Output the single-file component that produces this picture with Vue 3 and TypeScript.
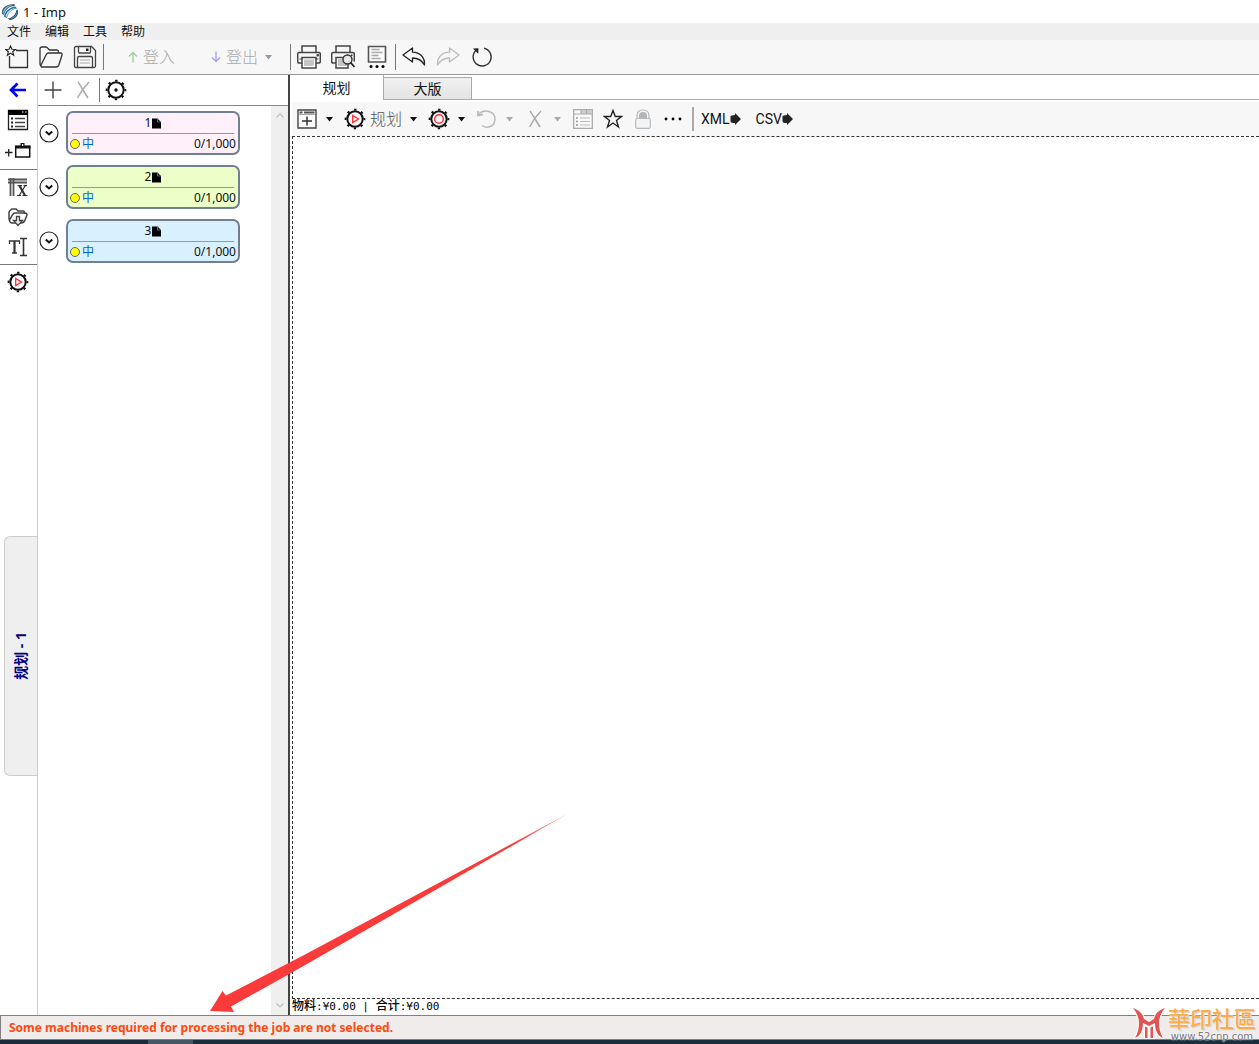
<script setup lang="ts">
import { ref } from 'vue'

interface Glyph {
  w: number
  h: number
  body: string
}

interface Job {
  id: number
  level: string
  count: string
  color: string
}

const gearBase =
  '<g fill="none" stroke="#111"><circle cx="11" cy="11" r="7.700" stroke-width="2"/>' +
  '<circle cx="11" cy="11" r="9.400" stroke-width="1.900" stroke-dasharray="2.4 4.98" stroke-dashoffset="1.2"/></g>'

const icons: Record<string, Glyph> = {
  logo: {
    w: 18, h: 18,
    body: '<path d="M1 11C0 6 4 2 10 1.500L13 1c1 0 1 1 .5 2C9 3 4.500 6 3 12z" fill="#4a5863"/><path d="M1.500 9.500C3 5 7 2 11 2 7 4 3.500 7 2.500 11z" fill="#6db9e8"/><path d="M3 13.500C4 8 9 4 14.500 3.500l1.500 2C10.500 6 7 10 6 15z" fill="#1473b8"/><path d="M4.500 13C6 8.500 9.500 5.500 14.500 4.800 10 7 7 10 5.800 14z" fill="#a9dcf9"/><path d="M6.500 15.500C12 15 15 11 15.500 6.500l1.500 1c1 5-3 9-8 9.500z" fill="#3b4b58"/><path d="M8.500 15.800c4-1 7-4 7.500-7.500 1 4-3 7.500-7.500 7.500z" fill="#3d9bdc"/>',
  },
  fresh: {
    w: 24, h: 24,
    body: '<path d="M11 5.500h11.500v17h-18V11" fill="none" stroke="#333" stroke-width="1.3"/><path d="M5.500 1l1.400 3.300 3.600.2-2.800 2.200 1 3.500-3.200-2-3.100 2 1-3.500L.6 4.500l3.500-.2z" fill="#f7f7f7" stroke="#222" stroke-width="1.100"/>',
  },
  open: {
    w: 24, h: 24,
    body: '<path d="M1 19V4q0-2 2-2h4q1 0 2 1.500L10.500 5H18q1.500 0 1.500 2v1M3 22h14q2 0 2.700-1.500L23 10q.5-2-1.500-2H9.500Q8 8 7.300 9.500L2 20q-.5 2 1 2zM1 19q0 2 2 3" fill="none" stroke="#333" stroke-width="1.3"/>',
  },
  save: {
    w: 24, h: 24,
    body: '<path d="M1.500 3q0-1.500 1.500-1.500h15.500l4 4V21q0 1.500-1.500 1.500H3q-1.500 0-1.500-1.500zM5.500 1.500V7q0 1 1 1h10q1 0 1-1V1.500M4.500 22V13q0-1.500 1.500-1.500h12q1.500 0 1.500 1.500v9" fill="none" stroke="#444" stroke-width="1.300"/><path d="M7 15h10M7 18h10" stroke="#aaa"/><path d="M13 3.500h2.500V6H13z" fill="#222"/>',
  },
  up: { w: 10, h: 12, body: '<path d="M5 11.500V1.500M1 5.500l4-4 4 4" fill="none" stroke="#9fd0a4" stroke-width="1.400"/>' },
  down: { w: 10, h: 12, body: '<path d="M5 .5v10M1 6.500l4 4 4-4" fill="none" stroke="#a9a5f8" stroke-width="1.400"/>' },
  caret: { w: 7, h: 5, body: '<path d="M0 0h7L3.500 4.500z" fill="currentColor"/>' },
  print: {
    w: 24, h: 24,
    body: '<g fill="none" stroke="#444" stroke-width="1.500"><path d="M5 7V1h14v6M5 18H2q-1.300 0-1.300-1.500V9Q.7 7.500 2 7.500h20q1.300 0 1.300 1.500v7.500Q23.300 18 22 18h-3"/><path d="M5 12.500h14V23H5z" fill="#fff"/></g><path d="M7 14.500h10V20l-2 1H7z" fill="#c4c4c4"/><path d="M20 9.500h1.500V11H20zM2.500 14h3M18.500 14h3" fill="#333" stroke="#444"/>',
  },
  preview: {
    w: 24, h: 24,
    body: '<g fill="none" stroke="#444" stroke-width="1.500"><path d="M5 7V1h14v6M5 18H2q-1.300 0-1.300-1.500V9Q.7 7.500 2 7.500h20q1.300 0 1.300 1.500v7.500"/><path d="M5 12.500h12V23H5z" fill="#fff"/></g><path d="M7 14h9v7H7z" fill="#c4c4c4"/><path d="M20 9.500h1.500V11H20z" fill="#333"/><circle cx="16.500" cy="14.500" r="4.500" fill="#e8e8e8" stroke="#333" stroke-width="1.400"/><path d="M19.500 17.500l4 4.500" stroke="#222" stroke-width="1.800"/>',
  },
  sheet: {
    w: 20, h: 24,
    body: '<path d="M1.500 1.500h17v15.500h-17z" fill="#fafafa" stroke="#555" stroke-width="1.600"/><path d="M4.500 4.500h8M4.500 7.500h11M4.500 10.500h7M4.500 13.500h9" stroke="#aaa" stroke-width="1.600"/><circle cx="4" cy="21.500" r="1.500"/><circle cx="10" cy="21.500" r="1.500"/><circle cx="16" cy="21.500" r="1.500"/>',
  },
  undo: { w: 24, h: 20, body: '<path d="M1 8l9.500-7v4.200C18 5.500 23 10 22.500 18 20 13.500 16 11 10.500 11v4z" fill="none" stroke="#222" stroke-width="1.300" stroke-linejoin="round"/>' },
  redo: { w: 24, h: 20, body: '<path d="M23 8l-9.500-7v4.200C6 5.500 1 10 1.500 18 4 13.500 8 11 13.500 11v4z" fill="none" stroke="#bcbcbc" stroke-width="1.300" stroke-linejoin="round"/>' },
  refresh: { w: 22, h: 22, body: '<path d="M13 2.200A9 9 0 1 1 5.500 4" fill="none" stroke="#333" stroke-width="1.400"/><path d="M2 2.500l5.500-.2-.3 5.500z" fill="#222"/>' },
  back: { w: 18, h: 16, body: '<path d="M17 8H3M8.500 1.500L2 8l6.500 6.500" fill="none" stroke="#00f" stroke-width="2.700"/>' },
  list: {
    w: 22, h: 22,
    body: '<path d="M1.500 1.500h19v19h-19z" fill="#fff" stroke="#222" stroke-width="1.300"/><path d="M1 1h20v5H1z" fill="#000"/><path d="M15 3h1.500M18 3h1.500" stroke="#fff"/><path d="M4 9.500h2M4 13.500h2M4 17.500h2" stroke="#222" stroke-width="2"/><path d="M8 9.500h10M8 13.500h10M8 17.500h10" stroke="#444" stroke-width="1.300"/>',
  },
  addcase: { w: 26, h: 18, body: '<path d="M0 11.500h7.500M3.700 8v7.500" stroke="#222" stroke-width="1.300"/><path d="M10.700 5.500h14v10.500h-14z" fill="#fff" stroke="#111" stroke-width="1.500"/><path d="M10 4.500h15.500v3H10zM15.500 2h4v3h-4z" fill="#111"/><path d="M17 3h1.200v2H17z" fill="#fff"/>' },
  gridx: { w: 22, h: 22, body: '<path d="M1 3.500h19M1 6.500h19M3.500 2v18M6.500 2v18" stroke="#555" stroke-width="1.800"/><path d="M10.500 9.700h4.500M16.500 9.700h3.500M10 19.500h4M15.500 19.500h5" stroke="#333" stroke-width="1.200"/><path d="M12.500 9.700l5.500 9.800" stroke="#333" stroke-width="2.200"/><path d="M18.200 9.700l-6 9.800" stroke="#333" stroke-width="1.200"/>' },
  inbox: { w: 22, h: 20, body: '<path d="M3 15L2 12V5q1-2 3-3h4l2 2h5q1.500 0 1.500 2v1M3 15q-1-1 0-3l3-5q1-1 2-1h10q2 0 2 2l-2 5q-1 3-4 3H5q-1 0-2-1" fill="none" stroke="#444" stroke-width="1.500"/><path d="M9.500 9.500h3v4h3L11 18.500 6.500 13.500h3z" fill="#eee" stroke="#444" stroke-width="1.300"/>' },
  text: { w: 20, h: 20, body: '<path d="M1.500 7V4h10v3" fill="none" stroke="#333" stroke-width="1.300"/><path d="M6.500 4v12" stroke="#333" stroke-width="2.200"/><path d="M4 16h5M12 1.500h7M12 18.500h7" stroke="#333" stroke-width="1.400"/><path d="M15.500 1.500v17" stroke="#333" stroke-width="1.600"/>' },
  gearplay: { w: 22, h: 22, body: gearBase + '<path d="M8.700 7.500l5.800 3.500-5.800 3.500z" fill="none" stroke="#fb2b37" stroke-width="1.300"/>' },
  geardot: { w: 22, h: 22, body: gearBase + '<circle cx="11" cy="11" r="1.700" fill="#111"/>' },
  gearring: { w: 22, h: 22, body: gearBase + '<circle cx="11" cy="11" r="4.300" fill="none" stroke="#fb2b37" stroke-width="1.400"/>' },
  plus: { w: 18, h: 18, body: '<path d="M.5 9h17M9 .5v17" stroke="#444" stroke-width="1.400"/>' },
  cross: { w: 14, h: 18, body: '<path d="M2 1c1 1 8 13 10 16M13 1C10 4 4 12 1.500 17" fill="none" stroke="#aaa" stroke-width="1.500"/>' },
  chevron: { w: 20, h: 20, body: '<circle cx="10" cy="10" r="9" fill="#fff" stroke="#222" stroke-width="1.200"/><path d="M6.800 8.500l3.200 3 3.200-3" fill="none" stroke="#111" stroke-width="2"/>' },
  page: { w: 9, h: 11, body: '<path d="M0 .5h5.500L9 4v6.500H0z" fill="#000"/><path d="M5.500 1v3H9" fill="none" stroke="#4b83c4" stroke-width=".8"/>' },
  addtable: { w: 20, h: 20, body: '<path d="M1 1h18v18H1z" fill="#fafafa" stroke="#444" stroke-width="1.400"/><path d="M2.500 3.500h3M7 3.500h10.500" stroke="#555" stroke-width="2"/><path d="M2 5.500h16" stroke="#aaa"/><path d="M5 12h10M10 7.500v9" stroke="#333" stroke-width="1.500"/>' },
  revert: { w: 20, h: 20, body: '<path d="M2 5C7-.5 18 2 18 10c0 8-8 10-13 6.500" fill="none" stroke="#bbb" stroke-width="1.500"/><path d="M1 2v4.500l5-1" fill="none" stroke="#b3b3b3" stroke-width="1.500"/>' },
  listoff: { w: 20, h: 20, body: '<path d="M.7.7h18.600v18.600H.7z" fill="#fafafa" stroke="#aaa" stroke-width="1.300"/><path d="M8 1h11v4H8z" fill="#ccc"/><path d="M1 5h18M8 1v4M13.500 1v4" stroke="#aaa"/><path d="M3 9h2M3 12.500h2M3 16h2" stroke="#999" stroke-width="1.600"/><path d="M7 9h10M7 12.500h10M7 16h10" stroke="#bbb" stroke-width="1.200"/>' },
  star: { w: 20, h: 20, body: '<path d="M10 1.500l2.300 6h6.200l-5 4 2 6.500-5.500-4-5.500 4 2-6.500-5-4h6.200z" fill="none" stroke="#222" stroke-width="1.400"/>' },
  lock: { w: 16, h: 20, body: '<path d="M2 10V7q0-6 6-6t6 6v3z" fill="#f4f4f4" stroke="#b4bbc0" stroke-width="1.200"/><path d="M4 10V7q0-4 4-4t4 4v3z" fill="#b5b5b5"/><path d="M.7 11q0-1.500 1.500-1.500h11.600q1.500 0 1.500 1.500v6.800q0 1.500-1.500 1.500H2.200q-1.500 0-1.500-1.500z" fill="#f4f4f4" stroke="#b4bbc0" stroke-width="1.200"/>' },
  dots: { w: 20, h: 4, body: '<circle cx="3" cy="2" r="1.400"/><circle cx="10" cy="2" r="1.400"/><circle cx="17" cy="2" r="1.400"/>' },
  export: { w: 11, h: 12, body: '<path d="M.5 3.500Q1 2 5 2V0l6 6-6 6v-2Q1 10 .5 8.500z" fill="#222"/>' },
  scrollup: { w: 8, h: 5, body: '<path d="M.5 4.500L4 1l3.500 3.500" fill="none" stroke="#c2c2c2" stroke-width="1.200"/>' },
  scrolldown: { w: 8, h: 5, body: '<path d="M.5.5L4 4 7.500.5" fill="none" stroke="#c2c2c2" stroke-width="1.200"/>' },
}

const menus = ['文件', '编辑', '工具', '帮助']
const fileTools = [['fresh', '新建'], ['open', '打开'], ['save', '保存']]
const printTools = [['print', '打印'], ['preview', '打印预览'], ['sheet', '报表']]
const historyTools = [['undo', '撤消'], ['redo', '重做'], ['refresh', '刷新']]
const railGroups = [
  [['back', '返回'], ['list', '列表'], ['addcase', '添加作业']],
  [['gridx', '网格'], ['inbox', '导入'], ['text', '文本']],
  [['gearplay', '运行']],
]
const jobs: Job[] = [
  { id: 1, level: '中', count: '0/1,000', color: '#fff0fa' },
  { id: 2, level: '中', count: '0/1,000', color: '#ecffc8' },
  { id: 3, level: '中', count: '0/1,000', color: '#d9f1ff' },
]
const tabs = ['规划', '大版']
const activeTab = ref(tabs[0])
</script>

<template>
  <div class="app">
    <header class="titlebar">
      <svg :width="icons.logo.w" :height="icons.logo.h" v-html="icons.logo.body" />
      <span>1 - Imp</span>
    </header>

    <nav class="menubar">
      <button v-for="m in menus" :key="m">{{ m }}</button>
    </nav>

    <div class="toolbar">
      <button v-for="[name, label] in fileTools" :key="name" class="tool" :aria-label="label">
        <svg :width="icons[name].w" :height="icons[name].h" v-html="icons[name].body" />
      </button>
      <i class="sep" />
      <button class="check in" disabled>
        <svg :width="icons.up.w" :height="icons.up.h" v-html="icons.up.body" />登入
      </button>
      <button class="check out" disabled>
        <svg :width="icons.down.w" :height="icons.down.h" v-html="icons.down.body" />登出
        <svg class="caret-off" :width="icons.caret.w" :height="icons.caret.h" v-html="icons.caret.body" />
      </button>
      <i class="sep" />
      <button v-for="[name, label] in printTools" :key="name" class="tool" :aria-label="label">
        <svg :width="icons[name].w" :height="icons[name].h" v-html="icons[name].body" />
      </button>
      <i class="sep" />
      <button v-for="[name, label] in historyTools" :key="name" class="tool" :aria-label="label">
        <svg :width="icons[name].w" :height="icons[name].h" v-html="icons[name].body" />
      </button>
    </div>

    <div class="body">
      <aside class="rail">
        <div v-for="(group, g) in railGroups" :key="g" class="rail-group">
          <button v-for="[name, label] in group" :key="name" :aria-label="label">
            <svg :width="icons[name].w" :height="icons[name].h" v-html="icons[name].body" />
          </button>
        </div>
        <button class="side-tab"><span>规划 - 1</span></button>
      </aside>

      <section class="jobs">
        <div class="jobs-bar">
          <button aria-label="添加"><svg :width="icons.plus.w" :height="icons.plus.h" v-html="icons.plus.body" /></button>
          <button aria-label="删除" disabled><svg :width="icons.cross.w" :height="icons.cross.h" v-html="icons.cross.body" /></button>
          <i class="sep" />
          <button aria-label="设置"><svg :width="icons.geardot.w" :height="icons.geardot.h" v-html="icons.geardot.body" /></button>
        </div>
        <div class="jobs-scroll">
          <ul class="job-list">
            <li v-for="job in jobs" :key="job.id">
              <button class="expand" aria-label="展开">
                <svg :width="icons.chevron.w" :height="icons.chevron.h" v-html="icons.chevron.body" />
              </button>
              <article class="card" :style="{ background: job.color }">
                <div class="card-head">
                  {{ job.id }}<svg :width="icons.page.w" :height="icons.page.h" v-html="icons.page.body" />
                </div>
                <div class="card-foot">
                  <i class="dot" /><span class="level">{{ job.level }}</span>
                  <span class="count">{{ job.count }}</span>
                </div>
              </article>
            </li>
          </ul>
          <div class="scrollbar">
            <svg :width="icons.scrollup.w" :height="icons.scrollup.h" v-html="icons.scrollup.body" />
            <svg :width="icons.scrolldown.w" :height="icons.scrolldown.h" v-html="icons.scrolldown.body" />
          </div>
        </div>
      </section>

      <main class="work">
        <div class="tabs" role="tablist">
          <button
            v-for="t in tabs"
            :key="t"
            role="tab"
            :aria-selected="t === activeTab"
            :class="{ active: t === activeTab }"
            @click="activeTab = t"
          >{{ t }}</button>
        </div>
        <div class="plan-bar">
          <div class="split">
            <button class="icon" aria-label="添加版面"><svg :width="icons.addtable.w" :height="icons.addtable.h" v-html="icons.addtable.body" /></button>
            <button class="drop" aria-label="更多"><svg :width="icons.caret.w" :height="icons.caret.h" v-html="icons.caret.body" /></button>
          </div>
          <div class="split">
            <button class="plan"><svg :width="icons.gearplay.w" :height="icons.gearplay.h" v-html="icons.gearplay.body" />规划</button>
            <button class="drop" aria-label="更多"><svg :width="icons.caret.w" :height="icons.caret.h" v-html="icons.caret.body" /></button>
          </div>
          <div class="split">
            <button class="icon" aria-label="选项"><svg :width="icons.gearring.w" :height="icons.gearring.h" v-html="icons.gearring.body" /></button>
            <button class="drop" aria-label="更多"><svg :width="icons.caret.w" :height="icons.caret.h" v-html="icons.caret.body" /></button>
          </div>
          <div class="split off">
            <button class="icon" aria-label="还原" disabled><svg :width="icons.revert.w" :height="icons.revert.h" v-html="icons.revert.body" /></button>
            <button class="drop" aria-label="更多" disabled><svg :width="icons.caret.w" :height="icons.caret.h" v-html="icons.caret.body" /></button>
          </div>
          <div class="split off">
            <button class="icon" aria-label="删除" disabled><svg :width="icons.cross.w" :height="icons.cross.h" v-html="icons.cross.body" /></button>
            <button class="drop" aria-label="更多" disabled><svg :width="icons.caret.w" :height="icons.caret.h" v-html="icons.caret.body" /></button>
          </div>
          <div class="split">
            <button class="icon" aria-label="属性" disabled><svg :width="icons.listoff.w" :height="icons.listoff.h" v-html="icons.listoff.body" /></button>
            <button class="icon" aria-label="收藏"><svg :width="icons.star.w" :height="icons.star.h" v-html="icons.star.body" /></button>
            <button class="icon" aria-label="锁定" disabled><svg :width="icons.lock.w" :height="icons.lock.h" v-html="icons.lock.body" /></button>
            <button class="icon" aria-label="更多选项"><svg :width="icons.dots.w" :height="icons.dots.h" v-html="icons.dots.body" /></button>
          </div>
          <i class="sep wide" />
          <div class="exports">
            <button v-for="f in ['XML', 'CSV']" :key="f">
              {{ f }}<svg :width="icons.export.w" :height="icons.export.h" v-html="icons.export.body" />
            </button>
          </div>
        </div>
        <div class="canvas" />
        <div class="totals"><b>物料</b>:¥0.00 | <b>合计</b>:¥0.00</div>
      </main>
    </div>

    <footer class="status">Some machines required for processing the job are not selected.</footer>
    <div class="taskbar"><i /></div>

    <svg class="pointer" width="360" height="200" aria-hidden="true">
      <defs>
        <linearGradient id="fade" x1="0" y1="0" x2="1" y2="0">
          <stop offset="0.85" stop-color="#fb3a3a" />
          <stop offset="1" stop-color="#fb3a3a" stop-opacity="0.5" />
        </linearGradient>
      </defs>
      <path d="M0 199L12.500 179 16 183.500 96 142 359 1 97 152 21 194.500 24 200z" fill="url(#fade)" />
    </svg>

    <div class="watermark">
      <svg width="38" height="36" viewBox="0 0 38 36">
        <g fill="#e05452" stroke="#fff" stroke-width="2" paint-order="stroke" stroke-linejoin="round">
          <path d="M3 3C9 5 13 9 14 14L19 17 24 14C25 9 29 5 35 3 31 8 29 13 29 18S30 28 33 33C28 31 25 26 25 18L19 21 13 18C13 26 10 31 5 33 8 28 9 23 9 18S7 8 3 3z" />
          <path d="M15 21.500l2.500 1V33H15zM20.500 22.500l2.500-1V33h-2.500z" />
        </g>
      </svg>
      <div class="mark-text">
        <strong>華印社區</strong>
        <small>www.52cnp.com</small>
      </div>
    </div>
  </div>
</template>

<style>
body {
  margin: 0;
}
</style>

<style scoped>
.app {
  position: relative;
  display: flex;
  flex-direction: column;
  min-height: 100vh;
  overflow: hidden;
  background: #fff;
  color: #111;
  font: 12px/16px "Noto Sans", "Noto Sans CJK SC", sans-serif;
}
button {
  display: flex;
  align-items: center;
  justify-content: center;
  flex: none;
  margin: 0;
  padding: 0;
  border: 0;
  background: none;
  color: inherit;
  font: inherit;
}
svg {
  display: block;
  flex: none;
}
.titlebar {
  display: flex;
  align-items: center;
  gap: 4px;
  height: 23px;
  padding-left: 1px;
  font-size: 13px;
}
.menubar {
  display: flex;
  height: 17px;
  padding-left: 7px;
  gap: 14px;
  background: #efefef;
}
.toolbar {
  display: flex;
  align-items: center;
  height: 34px;
  background: #f7f7f7;
  border-bottom: 1px solid #999;
}
.tool {
  width: 34px;
  height: 34px;
}
.sep {
  flex: none;
  width: 1px;
  height: 26px;
  margin: 0 1px;
  background: #777;
}
.check {
  justify-content: flex-start;
  gap: 5px;
  height: 34px;
  color: #aaa;
  font-size: 16px;
  font-weight: 300;
}
.in {
  width: 83px;
  padding-left: 23px;
}
.out {
  width: 101px;
  padding-left: 23px;
}
.caret-off {
  margin-left: 2px;
  color: #999;
}
.body {
  display: flex;
  flex: 1;
}
.rail {
  display: flex;
  flex-direction: column;
  width: 37px;
  border-right: 1px solid #ccc;
}
.rail-group {
  display: flex;
  flex-direction: column;
  padding: 2px 1px 2px 0;
}
.rail-group:first-child {
  padding: 0 1px 4px 0;
}
.rail-group + .rail-group {
  border-top: 1px solid #777;
}
.rail-group button {
  height: 30px;
}
.side-tab {
  width: 33px;
  height: 240px;
  margin: 237px 0 0 4px;
  border: 1px solid #ccc;
  border-right: 0;
  border-radius: 6px 0 0 6px;
  background: #efefef;
  color: #000080;
  font-size: 14px;
  font-weight: 700;
}
.side-tab span {
  writing-mode: vertical-rl;
  text-orientation: sideways;
  transform: rotate(180deg);
}
.jobs {
  display: flex;
  flex-direction: column;
  width: 250px;
  border-right: 2px solid #444;
}
.jobs-bar {
  display: flex;
  align-items: center;
  height: 30px;
  border-bottom: 1px solid #888;
}
.jobs-bar button {
  width: 30px;
  height: 30px;
}
.jobs-bar .sep {
  height: 24px;
}
.jobs-scroll {
  display: flex;
  flex: 1;
}
.job-list {
  display: flex;
  flex: 1;
  flex-direction: column;
  gap: 10px;
  margin: 0;
  padding: 5px 0 0 1px;
  list-style: none;
}
.job-list li {
  display: flex;
  align-items: center;
  gap: 7px;
}
.card {
  box-sizing: border-box;
  width: 174px;
  height: 44px;
  border: 2px solid #708090;
  border-radius: 7px;
}
.card-head {
  display: flex;
  align-items: center;
  justify-content: center;
  gap: 1px;
  height: 20px;
  margin: 0 4px;
  border-bottom: 1px solid #999;
}
.card-foot {
  display: flex;
  align-items: center;
  height: 19px;
  padding: 0 2px;
}
.dot {
  box-sizing: border-box;
  width: 10px;
  height: 10px;
  border: 1px solid #666;
  border-radius: 50%;
  background: #ff0;
}
.level {
  margin-left: 2px;
  color: #0064d2;
}
.count {
  margin-left: auto;
}
.scrollbar {
  display: flex;
  flex-direction: column;
  align-items: center;
  justify-content: space-between;
  width: 17px;
  padding: 7px 0;
  box-sizing: border-box;
  background: #efefef;
}
.work {
  display: flex;
  flex: 1;
  flex-direction: column;
  min-width: 0;
}
.tabs {
  display: flex;
  align-items: flex-end;
  height: 25px;
  border-bottom: 1px solid #aaa;
  box-sizing: border-box;
  font-size: 14px;
}
.tabs button {
  box-sizing: border-box;
  width: 88px;
  height: 22px;
  border: 1px solid #aaa;
  border-left: 0;
  border-bottom: 0;
  background: linear-gradient(#f0f0f0, #e4e4e4);
}
.tabs .active {
  width: 94px;
  height: 25px;
  margin-bottom: -1px;
  border-top: 0;
  background: #fff;
}
.plan-bar {
  display: flex;
  align-items: center;
  gap: 4px;
  height: 34px;
  margin: 2px 0 0 2px;
  background: #f7f7f7;
}
.split {
  display: flex;
}
.split button {
  height: 30px;
}
.split .icon {
  width: 30px;
}
.split .drop {
  width: 14px;
}
.off {
  color: #aaa;
}
.split .plan {
  gap: 4px;
  padding: 0 4px;
  color: #555;
  font-size: 16px;
  font-weight: 300;
}
.wide {
  width: 2px;
  height: 24px;
  margin: 0;
  background: #aaa;
}
.exports {
  display: flex;
  gap: 15px;
  padding-left: 3px;
  font: 14px/20px Roboto, sans-serif;
}
.canvas {
  flex: 1;
  margin-left: 2px;
  border: 1px dashed #333;
  border-right: 0;
}
.totals {
  height: 16px;
  padding-left: 2px;
  color: #000;
  font: 11px/14px "DejaVu Sans Mono", "Noto Sans CJK SC", monospace;
  white-space: pre;
}
.totals b {
  font-size: 12px;
  font-weight: 500;
}
.status {
  height: 23px;
  padding-left: 8px;
  border: 1px solid #808080;
  border-right: 0;
  background: #f0ecec;
  color: #ff4a0c;
  font: 700 12px/23px "Noto Sans", sans-serif;
}
.taskbar {
  height: 4px;
  padding-left: 148px;
  background: #1b2c3a;
}
.taskbar i {
  display: block;
  width: 45px;
  height: 4px;
  background: #465663;
}
.pointer {
  position: absolute;
  left: 210px;
  bottom: 32px;
  pointer-events: none;
}
.watermark {
  position: absolute;
  right: 3px;
  bottom: 1px;
  display: flex;
  align-items: center;
}
.mark-text {
  display: flex;
  flex-direction: column;
  align-items: center;
}
.mark-text strong {
  color: #f9ad4c;
  font: 500 22px/28px "Noto Sans CJK TC", sans-serif;
  text-shadow: 0 0 2px #fff, 1px 1px 1px #bbb;
}
.mark-text small {
  color: #777;
  font: 10px/12px "DejaVu Sans", sans-serif;
  text-shadow: 0 0 2px #fff, 0 0 1px #fff;
}
</style>
